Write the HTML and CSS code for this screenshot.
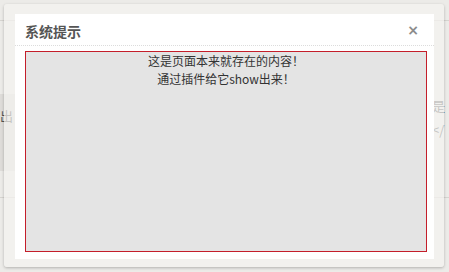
FILE: index.html
```html
<!DOCTYPE html>
<html>
<head>
<meta charset="utf-8">
<link rel="stylesheet" href="styles.css">
</head>
<body>
<div class="page">
  <div class="page-head"></div>
  <div class="page-main">
    <div class="side-left"><span>出</span></div>
    <div class="spacer"></div>
    <div class="side-right">
      <div class="r1">是</div>
      <div class="r2">&lt;/</div>
    </div>
  </div>
  <div class="page-foot"></div>
</div>

<div class="dialog">
  <div class="dialog-inner">
    <div class="dialog-title">
      <span class="title-text">系统提示</span>
      <span class="close">×</span>
    </div>
    <div class="dialog-body">
      <div class="content">
        <p>这是页面本来就存在的内容！</p>
        <p>通过插件给它show出来！</p>
      </div>
    </div>
  </div>
</div>
</body>
</html>
```

FILE: styles.css
```css
html, body {
  margin: 0;
  padding: 0;
}
body {
  width: 449px;
  height: 272px;
  overflow: hidden;
  background: #ecebe8;
  font-family: "Noto Sans CJK SC", "Noto Sans", sans-serif;
  position: relative;
}
.page {
  display: flex;
  flex-direction: column;
  height: 272px;
}
.page-head {
  height: 20px;
  border-bottom: 1px solid #d6d4d0;
}
.page-main {
  margin-top: 73px;
  height: 77px;
  display: flex;
}
.side-left {
  width: 15px;
  background: #dedcd9;
  overflow: hidden;
  display: flex;
  justify-content: flex-end;
  align-items: flex-start;
  padding-top: 12px;
  box-sizing: border-box;
  font-size: 13px;
  color: #555;
  white-space: nowrap;
}
.side-left span {
  flex: none;
  margin-right: 2px;
}
.spacer {
  flex: 1;
}
.side-right {
  width: 17px;
  overflow: hidden;
  white-space: nowrap;
  font-size: 13px;
  color: #555;
  padding-top: 0;
  padding-left: 1px;
}
.side-right .r1 {
  height: 24px;
  line-height: 24px;
}
.side-right .r2 {
  height: 24px;
  line-height: 24px;
}
.page-foot {
  margin-top: 26px;
  border-top: 1px solid #d6d4d0;
}

.dialog {
  position: absolute;
  left: 4px;
  top: 4px;
  width: 440px;
  height: 263px;
  box-sizing: border-box;
  padding: 10px 10px 8px 11px;
  background: rgba(245, 244, 241, 0.7);
  border-radius: 3px;
  box-shadow: 0 1px 3px rgba(0, 0, 0, 0.25);
}
.dialog-inner {
  background: #fff;
  height: 100%;
  display: flex;
  flex-direction: column;
}
.dialog-title {
  height: 31px;
  border-bottom: 1px dotted #dcdcdc;
  display: flex;
  align-items: center;
  justify-content: space-between;
  padding: 0 15px 0 10px;
  flex: none;
}
.title-text {
  font-size: 14px;
  font-weight: bold;
  color: #555;
  padding-top: 2px;
}
.close {
  font-family: "DejaVu Sans", sans-serif;
  font-size: 14px;
  font-weight: bold;
  color: #8c8c8c;
  line-height: 1;
}
.dialog-body {
  flex: 1;
  padding: 5px 7px 7px 10px;
  display: flex;
}
.content {
  flex: 1;
  background: #e4e4e4;
  border: 1px solid #c41e2a;
  text-align: center;
  font-size: 12px;
  line-height: 18px;
  color: #333;
}
.content p {
  margin: 0;
}
```
